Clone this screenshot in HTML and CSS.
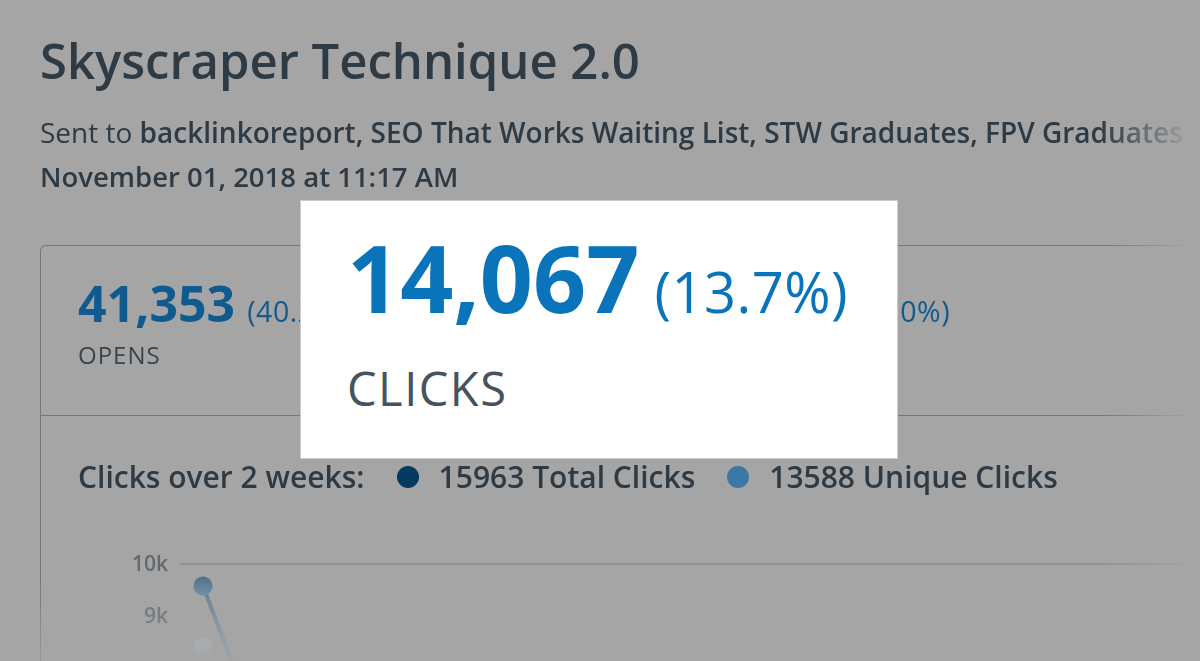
FILE: index.html
```html
<!DOCTYPE html>
<html lang="en">
<head>
<meta charset="utf-8">
<title>Skyscraper Technique 2.0 - Report</title>
<link rel="stylesheet" href="styles.css">
</head>
<body>
<div class="page">
  <h1 class="title">Skyscraper Technique 2.0</h1>
  <p class="sent">Sent to <b>backlinkoreport, SEO That Works Waiting List, STW Graduates, FPV Graduates</b></p>
  <p class="date">November 01, 2018 at 11:17 AM</p>

  <section class="card">
    <div class="stats">
      <div class="stat">
        <div class="stat-value"><span class="num">41,353</span><span class="pct">(40.2%)</span></div>
        <div class="stat-label">OPENS</div>
      </div>
      <div class="stat">
        <div class="stat-value"><span class="num">14,067</span><span class="pct">(13.7%)</span></div>
        <div class="stat-label">CLICKS</div>
      </div>
      <div class="stat">
        <div class="stat-value"><span class="num">1,120</span><span class="pct">(1.0%)</span></div>
        <div class="stat-label">BOUNCES</div>
      </div>
    </div>

    <div class="chart-section">
      <div class="legend">
        <span class="legend-title">Clicks over 2 weeks:</span>
        <span class="legend-item"><span class="dot dot-total"></span>15963 Total Clicks</span>
        <span class="legend-item"><span class="dot dot-unique"></span>13588 Unique Clicks</span>
      </div>
      <svg class="chart" width="1160" height="170" viewBox="0 0 1160 170" aria-hidden="true">
        <defs>
          <linearGradient id="stem" x1="0" y1="0" x2="0" y2="1">
            <stop offset="0" stop-color="#577a92"/>
            <stop offset="1" stop-color="#8fa3b2"/>
          </linearGradient>
          <linearGradient id="knob" x1="0" y1="0" x2="0" y2="1">
            <stop offset="0" stop-color="#4d6f88"/>
            <stop offset="1" stop-color="#6a8aa1"/>
          </linearGradient>
        </defs>
        <line x1="139" y1="69" x2="1160" y2="69" stroke="#909294" stroke-width="2"/>
        <line x1="139" y1="121" x2="1160" y2="121" stroke="#999b9d" stroke-width="1.5" stroke-dasharray="2 2"/>
        <text class="axis" x="127" y="76" text-anchor="end">10k</text>
        <text class="axis" x="127" y="128" text-anchor="end">9k</text>
        <circle cx="162" cy="151" r="9" fill="#a9b4c6"/>
        <line x1="162" y1="91" x2="194" y2="175" stroke="url(#stem)" stroke-width="4"/>
        <circle cx="162" cy="91" r="9.5" fill="url(#knob)"/>
      </svg>
    </div>
  </section>
</div>

<div class="highlight">
  <div class="big-value"><span class="big-num">14,067</span><span class="big-pct">(13.7%)</span></div>
  <div class="big-label">CLICKS</div>
</div>
</body>
</html>
```

FILE: styles.css
```css
html, body {
  margin: 0;
  height: 100%;
}

body {
  background: #a5a5a5;
  font-family: "Open Sans", "Noto Sans", sans-serif;
  color: #2e3a44;
  overflow: hidden;
  position: relative;
}

.page {
  padding: 29px 0 0 40px;
  -webkit-mask-image: linear-gradient(to right, #000 1100px, transparent 1192px), linear-gradient(to bottom, #000 575px, transparent 690px);
  -webkit-mask-composite: source-in;
  mask-image: linear-gradient(to right, #000 1100px, transparent 1192px), linear-gradient(to bottom, #000 575px, transparent 690px);
  mask-composite: intersect;
}

.title {
  margin: 0;
  font-size: 49px;
  line-height: 62px;
  font-weight: 600;
}

.sent {
  margin: 24px 0 0;
  font-size: 28px;
  line-height: 34px;
  font-weight: 400;
  white-space: nowrap;
}

.sent b {
  font-weight: 600;
}

.date {
  margin: 11px 0 0;
  font-size: 27.5px;
  line-height: 34px;
  font-weight: 600;
}

.card {
  margin-top: 51px;
  margin-right: -40px;
  height: 460px;
  border-top: 1px solid #6d7881;
  border-left: 1px solid #6d7881;
  border-top-left-radius: 6px;
}

.stats {
  display: grid;
  grid-template-columns: 316px 332px auto;
  padding: 27px 0 45px 37px;
  border-bottom: 1px solid #6d7881;
}

.stat-value {
  font-size: 50px;
  line-height: 60px;
  white-space: nowrap;
}

.num {
  font-weight: 700;
  color: #0f5a8f;
}

.pct {
  font-size: 28.5px;
  line-height: 1;
  letter-spacing: 0.5px;
  margin-left: 12px;
  color: #0f5a8f;
}

.stat-label {
  margin-top: 7px;
  font-size: 24px;
  line-height: 30px;
  letter-spacing: 1px;
  color: #3a444c;
}

.chart-section {
  padding: 43px 0 0 0;
}

.legend {
  display: flex;
  align-items: center;
  gap: 32px;
  padding-left: 37px;
  font-size: 30px;
  line-height: 36px;
  font-weight: 600;
  color: #2e3a44;
  white-space: nowrap;
}

.legend-item {
  display: flex;
  align-items: center;
  gap: 20px;
}

.dot {
  width: 22px;
  height: 22px;
  border-radius: 50%;
  display: inline-block;
}

.dot-total {
  background: #033a5e;
}

.dot-unique {
  background: #3a79a6;
}

.chart {
  display: block;
}

.axis {
  font-family: "Open Sans", "Noto Sans", sans-serif;
  font-size: 21px;
  font-weight: 600;
  fill: #5e6971;
}

.highlight {
  position: absolute;
  left: 300px;
  top: 200px;
  width: 598px;
  height: 259px;
  box-sizing: border-box;
  background: #fff;
  border: 1px solid #cdcdcd;
  padding: 21px 0 0 46px;
}

.big-value {
  font-size: 93px;
  line-height: 110px;
  white-space: nowrap;
  color: #0a74ba;
}

.big-num {
  font-weight: 700;
}

.big-pct {
  font-size: 56px;
  line-height: 1;
  font-weight: 500;
  letter-spacing: 0.5px;
  margin-left: 15px;
}

.big-label {
  margin-top: 28px;
  font-size: 47px;
  line-height: 56px;
  font-weight: 400;
  letter-spacing: 1.5px;
  color: #46525c;
}
```
